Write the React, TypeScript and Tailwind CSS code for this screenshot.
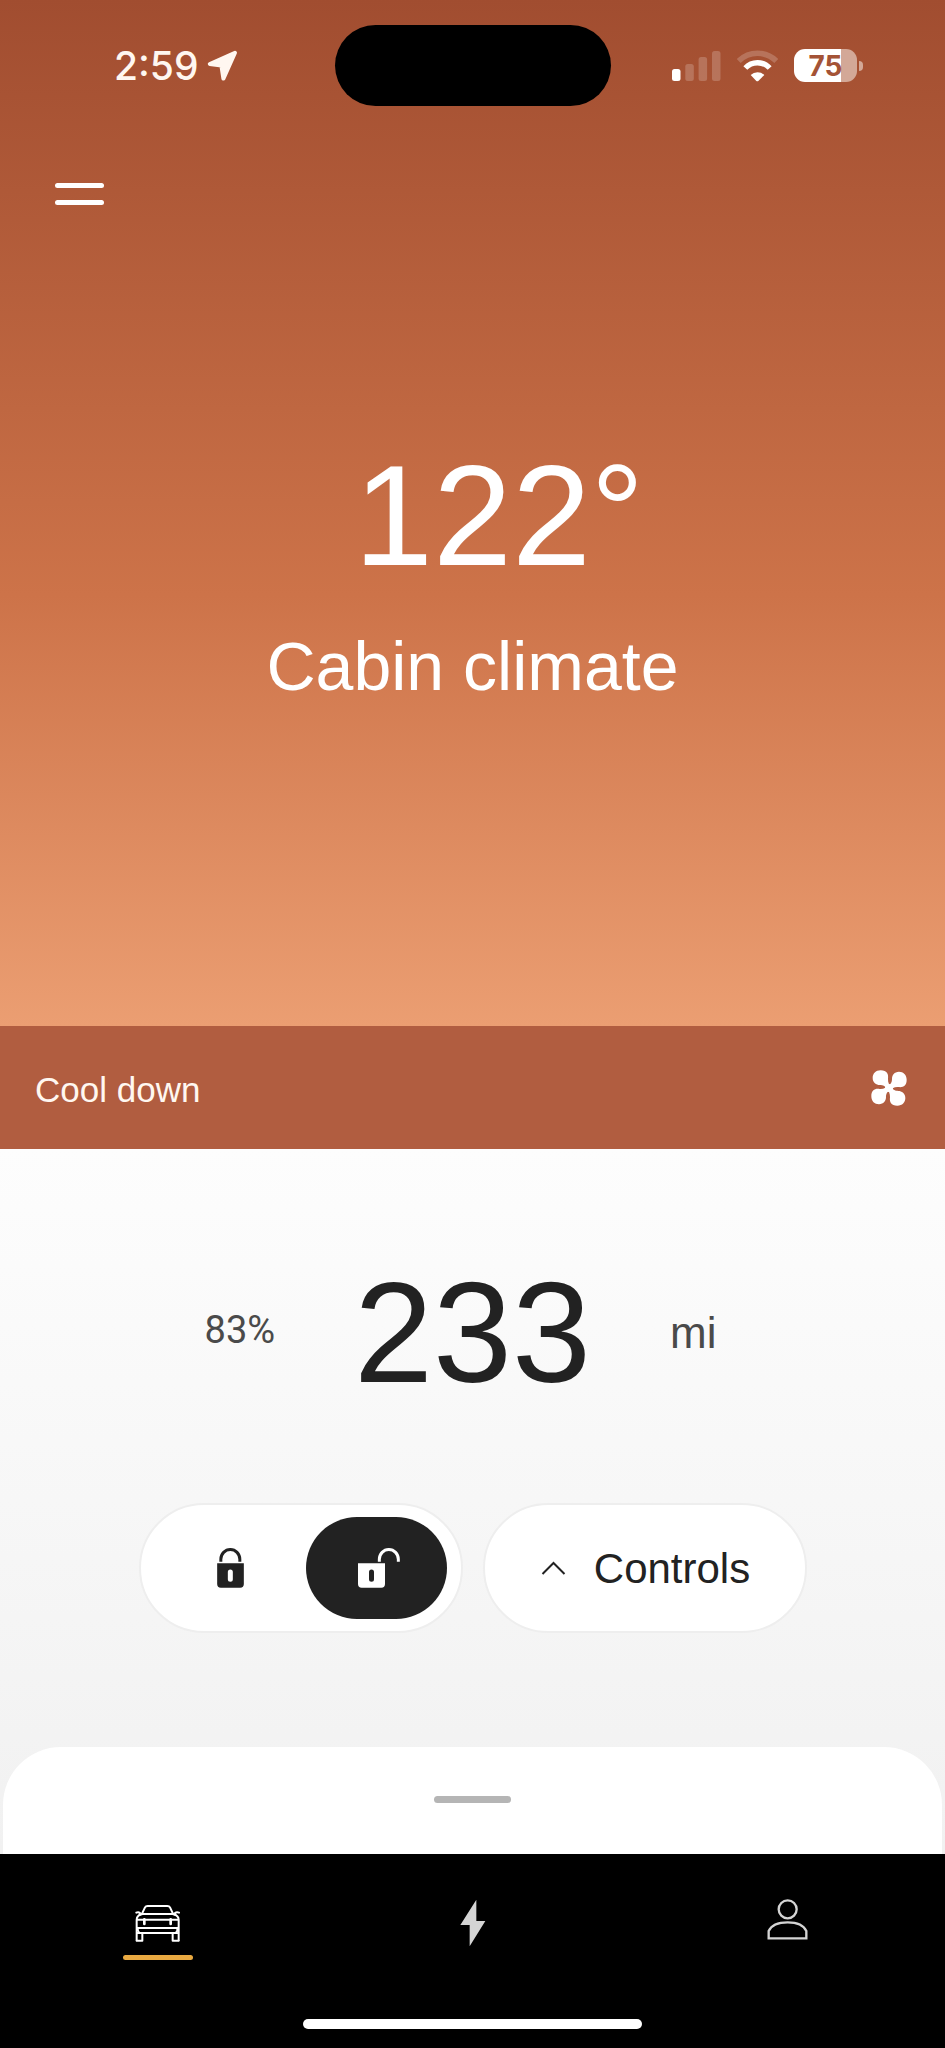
import React, { useState } from "react";

function LocationIcon() {
  return (
    <svg width="31" height="32" viewBox="0 0 31 32" aria-hidden="true">
      <path
        d="M28 2.8 L2.8 14 L14.4 15.6 L16.4 28.6 Z"
        fill="#fff7f0"
        stroke="#fff7f0"
        strokeWidth="4"
        strokeLinejoin="round"
      />
    </svg>
  );
}

function SignalIcon() {
  return (
    <svg width="49" height="32" viewBox="0 0 49 32" fill="white" aria-hidden="true">
      <rect x="0" y="19" width="8.5" height="12" rx="2.5" />
      <rect x="13.3" y="14" width="8.5" height="17" rx="2.5" opacity="0.2" />
      <rect x="26.6" y="7" width="8.5" height="24" rx="2.5" opacity="0.2" />
      <rect x="40" y="1" width="8.5" height="30" rx="2.5" opacity="0.2" />
    </svg>
  );
}

function WifiIcon() {
  return (
    <svg width="41" height="32" viewBox="0 0 123 96" fill="none" aria-hidden="true">
      <path d="M5 33 A80 80 0 0 1 118 33" stroke="white" strokeWidth="17" opacity="0.2" />
      <path d="M25 54 A50 50 0 0 1 98 54" stroke="white" strokeWidth="16" />
      <path d="M41 75 A30 30 0 0 1 82 75 L64 93 Q61 95 58 93 Z" fill="white" />
    </svg>
  );
}

function Battery() {
  return (
    <div className="flex items-center gap-0.5">
      <div className="flex h-[33px] w-[63px] items-center justify-center rounded-[11px] bg-linear-to-r from-white from-75% to-[#d3a897] to-75% text-[28px] leading-none font-bold text-[#a45336]">
        75
      </div>
      <div className="h-[10px] w-1 rounded-r-full bg-[#d3a897]" />
    </div>
  );
}

function FanIcon() {
  const blade =
    "M8 4 C2 -8 -4 -16 -3 -28 C-1 -42 -6 -53 -25 -53 C-40 -53 -49 -43 -49 -30 C-49 -16 -38 -9 -28 -9 C-18 -9 -10 -6 -4 8 Z";
  return (
    <svg width="36" height="36" viewBox="-54 -54 108 108" fill="white" aria-hidden="true">
      <circle r="12" />
      {[0, 90, 180, 270].map((deg) => (
        <path key={deg} d={blade} transform={`rotate(${deg})`} />
      ))}
    </svg>
  );
}

function LockIcon() {
  return (
    <svg width="27" height="40" viewBox="0 0 80 120" fill="none" aria-hidden="true">
      <path d="M11 41 V34 A28 29 0 0 1 68 34 V41" stroke="currentColor" strokeWidth="9" />
      <path
        fillRule="evenodd"
        fill="currentColor"
        d="M0 46 H80 V108 Q80 119 69 119 H11 Q0 119 0 108 Z M32 72 V94 A7.5 7.5 0 0 0 47 94 V72 A7.5 7.5 0 0 0 32 72 Z"
      />
    </svg>
  );
}

function UnlockIcon() {
  return (
    <svg width="42" height="40" viewBox="0 0 126 120" fill="none" aria-hidden="true">
      <path d="M64 41 V34 A28 29 0 0 1 121 34 V41" stroke="currentColor" strokeWidth="9" />
      <path
        fillRule="evenodd"
        fill="currentColor"
        d="M0 46 H81 V108 Q81 119 70 119 H11 Q0 119 0 108 Z M33 72 V94 A7.5 7.5 0 0 0 48 94 V72 A7.5 7.5 0 0 0 33 72 Z"
      />
    </svg>
  );
}

function CarIcon() {
  return (
    <svg
      width="45"
      height="37"
      viewBox="103 136 135 111"
      fill="none"
      stroke="white"
      strokeWidth="6"
      strokeLinejoin="round"
      strokeLinecap="round"
      aria-hidden="true"
    >
      <path d="M123 164 L133 143 Q135 139 141 139 H200 Q206 139 208 143 L218 164" />
      <path d="M124 163 H217" />
      <path d="M107 159 Q113 156 118 160 L117 166 M235 159 Q228 156 223 160 L224 166" />
      <path d="M108 242 V181 Q108 168 122 164 M234 242 V181 Q234 168 219 164" />
      <path d="M110 180 H232" />
      <path d="M131 179 V193 M210 179 V193" strokeWidth="8" />
      <path d="M109 205 H232 M110 220 H231 M111 206 Q110 214 117 220 M230 206 Q232 214 225 220" />
      <path d="M108 243 H125 V221 M234 243 H216 V221" />
    </svg>
  );
}

function BoltIcon() {
  return (
    <svg width="26" height="48" viewBox="0 0 78 144" fill="#d4d4d4" aria-hidden="true">
      <path d="M49 2 L1 78 H29 V142 L76 66 H49 Z" />
    </svg>
  );
}

function ProfileIcon() {
  return (
    <svg
      width="41"
      height="41"
      viewBox="0 0 123 123"
      fill="none"
      stroke="#d4d4d4"
      strokeWidth="7"
      aria-hidden="true"
    >
      <ellipse cx="62" cy="31" rx="27" ry="27" />
      <path d="M5 118 V96 C14 76 38 70 62 70 C86 70 109 76 118 96 V118 Z" />
    </svg>
  );
}

export default function App() {
  const [locked, setLocked] = useState(false);
  const active = "bg-[#222222] text-white";
  const idle = "bg-white text-[#222222]";

  return (
    <div className="flex min-h-screen flex-col bg-black font-['Liberation_Sans',Arial,sans-serif]">
      <header className="bg-linear-to-b from-[#a14d30] via-[#cd7349] via-58% to-[#eb9e72] pt-[25px] pb-[326px] text-white">
        <div className="grid grid-cols-[1fr_276px_1fr] items-center font-[Inter,sans-serif]">
          <div className="flex items-center gap-2 pl-[114px]">
            <span className="text-[39px] leading-none font-medium text-[#fff7f0]">2:59</span>
            <LocationIcon />
          </div>
          <div className="h-[81px] rounded-full bg-black" />
          <div className="flex items-center justify-end gap-4 pr-[82px]">
            <SignalIcon />
            <WifiIcon />
            <Battery />
          </div>
        </div>

        <button aria-label="Menu" className="mt-[77px] ml-[55px] flex flex-col gap-3">
          <span className="h-[5px] w-[49px] rounded-full bg-white" />
          <span className="h-[5px] w-[49px] rounded-full bg-white" />
        </button>

        <div className="mt-[240px] flex flex-col items-center gap-[45px] leading-none">
          <p className="relative text-[142px]">
            122<span className="absolute left-full text-[132px]">°</span>
          </p>
          <h1 className="text-[68px]">Cabin climate</h1>
        </div>
      </header>

      <button className="flex h-[123px] items-center justify-between bg-[#b15d40] pr-[38px] pl-[35px] text-[35px] text-[#fff7f0]">
        <span className="pt-1.5">Cool down</span>
        <FanIcon />
      </button>

      <main className="flex grow flex-col bg-linear-to-b from-[#fdfdfd] to-[#f1f1f1]">
        <div className="mt-[113px] flex items-center justify-center gap-[79px] pr-6 leading-none text-[#4a4a4a]">
          <span className="pb-1.5 font-[Roboto,sans-serif] text-[38px]">83%</span>
          <span className="text-[142px] text-[#222222]">233</span>
          <span className="text-[44px]">mi</span>
        </div>

        <div className="mt-[99px] flex justify-center gap-5">
          <div className="flex h-[130px] w-[324px] rounded-full border-2 border-[#eeeeee] bg-white px-3.5 py-3">
            <button
              aria-label="Lock"
              onClick={() => setLocked(true)}
              className={`flex flex-1 items-center justify-center rounded-full ${locked ? active : idle}`}
            >
              <LockIcon />
            </button>
            <button
              aria-label="Unlock"
              onClick={() => setLocked(false)}
              className={`flex w-[141px] items-center justify-center rounded-full pl-1.5 ${locked ? idle : active}`}
            >
              <UnlockIcon />
            </button>
          </div>
          <button className="flex h-[130px] w-[324px] items-center justify-center gap-7 rounded-full border-2 border-[#eeeeee] bg-white pl-0.5 text-[42px] text-[#222222]">
            <svg width="25" height="14" viewBox="0 0 25 14" fill="none" aria-hidden="true">
              <path d="M1.5 13 L12.5 2 L23.5 13" stroke="currentColor" strokeWidth="2" />
            </svg>
            Controls
          </button>
        </div>

        <div className="mx-[3px] mt-auto flex h-[107px] justify-center rounded-t-[58px] bg-white pt-[49px]">
          <div className="h-[7px] w-[77px] rounded-full bg-[#b5b5b5]" />
        </div>
      </main>

      <nav className="bg-black pb-[19px]">
        <div className="grid h-[165px] grid-cols-3 justify-items-center pt-[45px]">
          <a href="#vehicle" aria-label="Vehicle" className="flex h-[61px] w-[70px] flex-col items-center justify-between pt-1.5">
            <CarIcon />
            <span className="h-[5px] w-full rounded-full bg-[#e9a941]" />
          </a>
          <a href="#charging" aria-label="Charging">
            <BoltIcon />
          </a>
          <a href="#account" aria-label="Account">
            <ProfileIcon />
          </a>
        </div>
        <div className="mx-auto h-[10px] w-[339px] rounded-full bg-white" />
      </nav>
    </div>
  );
}
